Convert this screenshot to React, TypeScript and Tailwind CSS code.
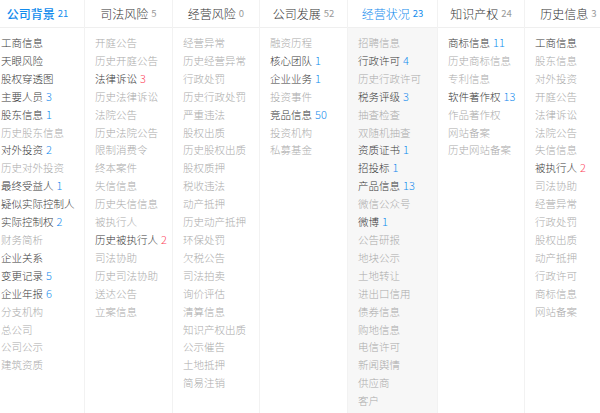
import React from "react";

type Item = { label: string; count?: number; red?: boolean };
type Column = { title: string; count: number; width: string; active?: boolean; hover?: boolean; items: Item[] };

const L = (label: string, count?: number, red?: boolean): Item => ({ label, count, red });

const columns: Column[] = [
  {
    title: "公司背景",
    count: 21,
    width: "w-[93px]",
    active: true,
    items: [
      L("工商信息", 0), L("天眼风险", 0), L("股权穿透图", 0), L("主要人员", 3), L("股东信息", 1),
      L("历史股东信息"), L("对外投资", 2), L("历史对外投资"), L("最终受益人", 1), L("疑似实际控制人", 0),
      L("实际控制权", 2), L("财务简析"), L("企业关系", 0), L("变更记录", 5), L("企业年报", 6),
      L("分支机构"), L("总公司"), L("公司公示"), L("建筑资质"),
    ],
  },
  {
    title: "司法风险",
    count: 5,
    width: "w-[88px]",
    items: [
      L("开庭公告"), L("历史开庭公告"), L("法律诉讼", 3, true), L("历史法律诉讼"), L("法院公告"),
      L("历史法院公告"), L("限制消费令"), L("终本案件"), L("失信信息"), L("历史失信信息"),
      L("被执行人"), L("历史被执行人", 2, true), L("司法协助"), L("历史司法协助"), L("送达公告"), L("立案信息"),
    ],
  },
  {
    title: "经营风险",
    count: 0,
    width: "w-[87px]",
    items: [
      L("经营异常"), L("历史经营异常"), L("行政处罚"), L("历史行政处罚"), L("严重违法"),
      L("股权出质"), L("历史股权出质"), L("股权质押"), L("税收违法"), L("动产抵押"),
      L("历史动产抵押"), L("环保处罚"), L("欠税公告"), L("司法拍卖"), L("询价评估"),
      L("清算信息"), L("知识产权出质"), L("公示催告"), L("土地抵押"), L("简易注销"),
    ],
  },
  {
    title: "公司发展",
    count: 52,
    width: "w-[88px]",
    items: [
      L("融资历程"), L("核心团队", 1), L("企业业务", 1), L("投资事件"), L("竞品信息", 50),
      L("投资机构"), L("私募基金"),
    ],
  },
  {
    title: "经营状况",
    count: 23,
    width: "w-[90px]",
    hover: true,
    items: [
      L("招聘信息"), L("行政许可", 4), L("历史行政许可"), L("税务评级", 3), L("抽查检查"),
      L("双随机抽查"), L("资质证书", 1), L("招投标", 1), L("产品信息", 13), L("微信公众号"),
      L("微博", 1), L("公告研报"), L("地块公示"), L("土地转让"), L("进出口信用"),
      L("债券信息"), L("购地信息"), L("电信许可"), L("新闻舆情"), L("供应商"), L("客户"),
    ],
  },
  {
    title: "知识产权",
    count: 24,
    width: "w-[87px]",
    items: [
      L("商标信息", 11), L("历史商标信息"), L("专利信息"), L("软件著作权", 13), L("作品著作权"),
      L("网站备案"), L("历史网站备案"),
    ],
  },
  {
    title: "历史信息",
    count: 3,
    width: "w-[88px]",
    items: [
      L("工商信息", 0), L("股东信息"), L("对外投资"), L("开庭公告"), L("法律诉讼"),
      L("法院公告"), L("失信信息"), L("被执行人", 2, true), L("司法协助"), L("经营异常"),
      L("行政处罚"), L("股权出质"), L("动产抵押"), L("行政许可"), L("商标信息"), L("网站备案"),
    ],
  },
];

function ItemRow({ item }: { item: Item }) {
  const dark = item.count !== undefined;
  return (
    <div className={`leading-[17.9px] whitespace-nowrap ${dark ? "text-[#3a3a3a]" : "text-[#ababab]"}`}>
      {item.label}
      {item.count ? (
        <span className={`ml-[3px] text-[11px] ${item.red ? "text-[#fd485e]" : "text-[#128bed]"}`}>{item.count}</span>
      ) : null}
    </div>
  );
}

export default function App() {
  return (
    <div className="w-[600px] h-[413px] overflow-hidden bg-white" style={{ fontFamily: '"Noto Sans CJK SC", "Noto Sans", sans-serif' }}>
      <div className="flex -ml-[9px] h-[413px]">
        {columns.map((col, i) => (
          <div key={col.title} className={`${col.width} shrink-0 flex flex-col ${i > 0 ? "border-l border-[#f2f2f2]" : ""}`}>
            <div className="h-[28px] shrink-0 flex items-center justify-center border-b border-[#efefef] whitespace-nowrap">
              <span
                className={`text-[12px] ${col.active ? "font-medium text-[#128bed]" : col.hover ? "font-light text-[#128bed]" : "font-light text-[#333333]"}`}
              >
                {col.title}
              </span>
              <span className={`ml-[3px] text-[9.5px] ${col.active || col.hover ? "text-[#128bed]" : "text-[#999999]"}`}>
                {col.count}
              </span>
            </div>
            <div className={`flex-1 pl-[10px] pt-[6px] text-[10.5px] font-light ${col.hover ? "bg-[#f7f7f7]" : ""}`}>
              {col.items.map((it) => (
                <ItemRow key={it.label} item={it} />
              ))}
            </div>
          </div>
        ))}
      </div>
    </div>
  );
}
